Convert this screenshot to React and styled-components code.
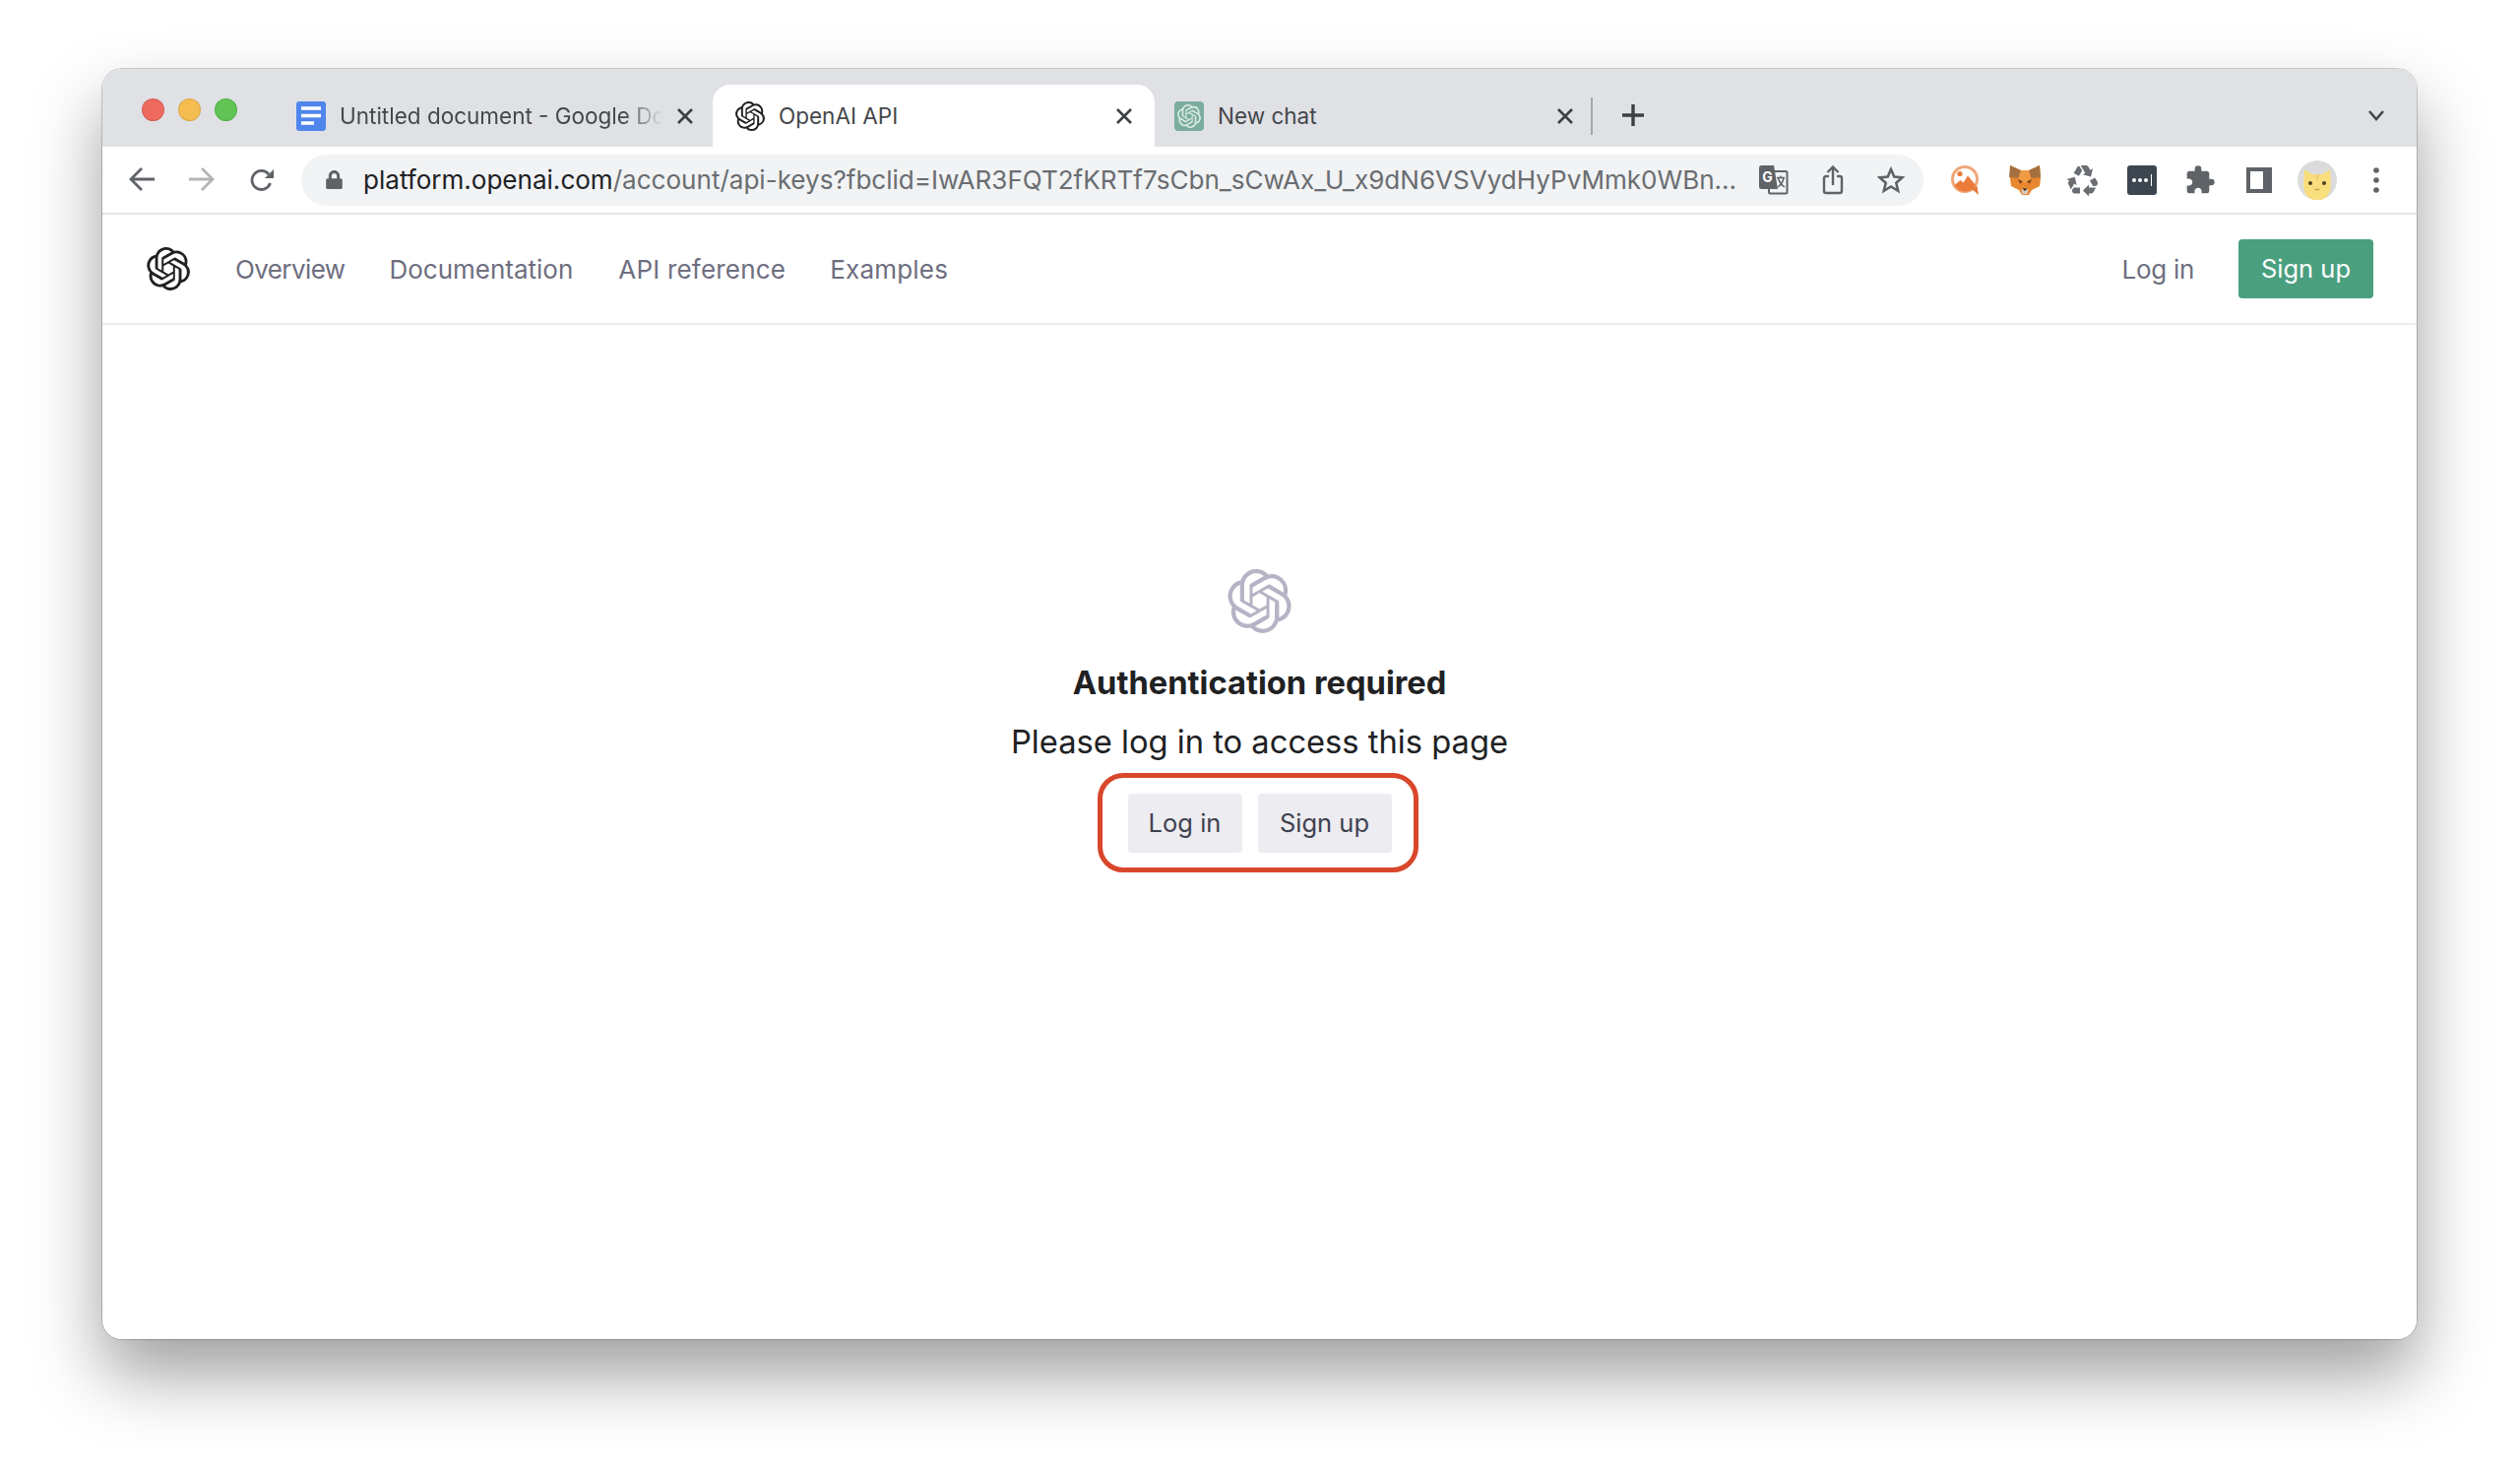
import React from "react";
import styled, { createGlobalStyle } from "styled-components";
import { SiOpenai } from "react-icons/si";
import { MdExtension, MdRecycling } from "react-icons/md";
import { FaLock } from "react-icons/fa";

const GlobalStyle = createGlobalStyle`
  html, body {
    margin: 0;
    padding: 0;
    background: #fff;
    overflow: hidden;
  }
  * { box-sizing: border-box; }
`;

const Stage = styled.div`
  width: 2560px;
  height: 1499px;
  padding: 70px 105px 0 104px;
  font-family: Inter, "Noto Sans", sans-serif;
`;

const BrowserWindow = styled.div`
  height: 1290px;
  display: flex;
  flex-direction: column;
  border-radius: 20px;
  background: #fff;
  overflow: hidden;
`;

const WindowShadow = styled.div`
  border-radius: 20px;
  box-shadow: 0 0 0 1px rgba(0, 0, 0, 0.18), 0 36px 70px rgba(0, 0, 0, 0.38);
`;

const TabStrip = styled.div`
  height: 79px;
  flex: none;
  display: flex;
  align-items: flex-end;
  background: #dfe1e5;
  padding-left: 40px;
`;

const TrafficLights = styled.div`
  width: 148px;
  align-self: flex-start;
  display: flex;
  gap: 14px;
  padding-top: 30px;
`;

const Light = styled.span`
  width: 23px;
  height: 23px;
  border-radius: 50%;
  background: ${(p) => p.$color};
  border: 1px solid rgba(0, 0, 0, 0.1);
`;

const Tab = styled.div`
  height: 63px;
  width: ${(p) => p.$width}px;
  display: flex;
  align-items: center;
  padding: 0 ${(p) => p.$right}px 0 ${(p) => p.$left}px;
  border-radius: 18px 18px 0 0;
  background: ${(p) => (p.$active ? "#fff" : "transparent")};
  color: #45474b;
  font-size: 22.5px;
`;

const TabTitle = styled.span`
  flex: 1;
  margin-left: 14px;
  white-space: nowrap;
  overflow: hidden;
  ${(p) => p.$fade && "mask-image: linear-gradient(90deg, #000 88%, transparent 100%);"}
`;

const TabClose = styled.svg`
  width: 18px;
  height: 18px;
  flex: none;
  margin: 0 0 0 14px;
`;

const TabDivider = styled.span`
  width: 2px;
  height: 38px;
  background: #a5a7ab;
  margin-bottom: 12px;
`;

const NewTab = styled.svg`
  width: 24px;
  height: 24px;
  margin: 0 0 20px 29px;
`;

const Chevron = styled.svg`
  width: 18px;
  height: 12px;
  margin: 0 32px 26px auto;
`;

const ChatBadge = styled.div`
  width: 30px;
  height: 30px;
  flex: none;
  display: flex;
  align-items: center;
  justify-content: center;
  border-radius: 4px;
  background: #7bad9f;
  color: #dcebe6;
`;

const Toolbar = styled.div`
  height: 69px;
  flex: none;
  display: flex;
  align-items: center;
  padding: 0 0 0 27px;
  border-bottom: 2px solid #e3e4e6;
`;

const NavButtons = styled.div`
  width: 175px;
  flex: none;
  display: flex;
  gap: 35px;
  color: #5f6368;
`;

const AddressBar = styled.div`
  width: 1648px;
  height: 52px;
  flex: none;
  display: flex;
  align-items: center;
  padding: 0 19px 0 24px;
  border-radius: 26px;
  background: #f1f3f4;
  color: #5f6368;
`;

const Url = styled.div`
  flex: 1;
  margin-left: 20px;
  font-size: 26.05px;
  white-space: nowrap;
  color: #6a6d71;
`;

const UrlHost = styled.span`
  color: #202124;
`;

const OmniActions = styled.div`
  display: flex;
  align-items: center;
  gap: 34px;
  margin-left: 12px;
`;

const Extensions = styled.div`
  display: flex;
  align-items: center;
  gap: 23.5px;
  margin-left: 25px;
  color: #5f6368;
`;

const IconSlot = styled.div`
  width: 36px;
  height: 36px;
  display: flex;
  align-items: center;
  justify-content: center;
`;

const PasswordExt = styled.div`
  width: 30px;
  height: 30px;
  display: flex;
  align-items: center;
  gap: 2px;
  justify-content: center;
  border-radius: 3px;
  background: #3b4650;
`;

const Dot = styled.span`
  width: 4px;
  height: 4px;
  border-radius: 50%;
  background: #fff;
`;

const Caret = styled.span`
  width: 1px;
  height: 12px;
  background: #fff;
  margin-left: 1px;
`;

const SidePanel = styled.div`
  width: 26px;
  height: 26px;
  border: 4px solid #5f6368;
  border-right-width: 9px;
`;

const Avatar = styled.svg`
  width: 40px;
  height: 40px;
  border-radius: 50%;
  flex: none;
`;

const TopNav = styled.nav`
  height: 112px;
  flex: none;
  display: flex;
  align-items: center;
  padding: 0 44px 0 45px;
  border-bottom: 2px solid #ececf1;
  font-family: Inter, sans-serif;
`;

const NavLink = styled.a`
  margin-left: ${(p) => p.$gap}px;
  font-size: 26px;
  letter-spacing: ${(p) => p.$spacing || 0}px;
  color: #6e6e80;
`;

const Spacer = styled.div`
  flex: 1;
`;

const PrimaryButton = styled.button`
  width: 137px;
  height: 60px;
  margin-left: 45px;
  padding-bottom: 2px;
  border: 0;
  border-radius: 4px;
  background: #4a9f7f;
  color: #fff;
  font: 25.5px Inter, sans-serif;
`;

const Content = styled.main`
  flex: 1;
  display: flex;
  flex-direction: column;
  align-items: center;
  padding-top: 248px;
  color: #202123;
  font-family: Inter, sans-serif;
`;

const Title = styled.h1`
  margin: 28px 0 0;
  font-size: 32.7px;
  line-height: 44px;
  font-weight: 700;
`;

const Message = styled.p`
  margin: 16px 0 0;
  font-size: 32.7px;
  line-height: 44px;
`;

const Highlight = styled.div`
  width: 326px;
  height: 101px;
  margin: 10px 4px 0 0;
  padding-left: 26px;
  display: flex;
  align-items: center;
  gap: 16px;
  border: 5px solid #d9472b;
  border-radius: 26px;
`;

const GhostButton = styled.button`
  width: ${(p) => p.$width}px;
  height: 60px;
  border: 0;
  border-radius: 4px;
  background: #ececf1;
  color: #40414f;
  font: 25.5px Inter, sans-serif;
`;

const CloseIcon = () => (
  <TabClose viewBox="0 0 18 18">
    <path d="M2 2 L16 16 M16 2 L2 16" stroke="#3c4043" strokeWidth="2.6" />
  </TabClose>
);

const DocsIcon = () => (
  <svg width="30" height="30" viewBox="0 0 30 30">
    <rect width="30" height="30" rx="3" fill="#4f86ec" />
    <path d="M5 7h20M5 14.5h20M5 22h13" stroke="#fff" strokeWidth="3.4" />
  </svg>
);

const BackArrow = ({ faded }) => (
  <svg width="26" height="24" viewBox="0 0 26 24" fill="none" stroke={faded ? "#b2b4b7" : "#5f6368"} strokeWidth="2.8">
    {faded ? <path d="M0 12h24M13 1l11 11-11 11" /> : <path d="M26 12H2M13 1L2 12l11 11" />}
  </svg>
);

const Reload = () => (
  <svg width="26" height="26" viewBox="0 0 26 26" fill="none">
    <path d="M21.5 16a9.5 9.5 0 1 1-1.6-9" stroke="#5f6368" strokeWidth="2.8" />
    <path d="M25 2v9h-9z" fill="#5f6368" />
  </svg>
);

const TranslateIcon = () => (
  <svg width="30" height="30" viewBox="0 0 30 30">
    <rect x="10" y="6" width="18.5" height="22.5" rx="1.5" fill="#f1f3f4" stroke="#5f6368" strokeWidth="2" />
    <path d="M2.5 0H15l4 24H2.5A2.5 2.5 0 0 1 0 21.5v-19A2.5 2.5 0 0 1 2.5 0z" fill="#5f6368" />
    <text x="8.5" y="17" fontSize="14" fontWeight="700" fill="#fff" textAnchor="middle" fontFamily="Inter, sans-serif">G</text>
    <path d="M18 12.5h8M22 10.5v2M19.5 13c1 4 3.5 7 6.5 9M25 13c-1 4-3 7-6 9" fill="none" stroke="#5f6368" strokeWidth="1.5" />
  </svg>
);

const ShareIcon = () => (
  <svg width="22" height="30" viewBox="0 0 22 30" fill="none" stroke="#5f6368" strokeWidth="2.4">
    <path d="M7 11H4a2 2 0 0 0-2 2v13a2 2 0 0 0 2 2h14a2 2 0 0 0 2-2V13a2 2 0 0 0-2-2h-3" />
    <path d="M11 20V2M5.500 7L11 1.500 16.500 7" />
  </svg>
);

const StarIcon = () => (
  <svg width="28" height="28" viewBox="0 0 28 28" fill="none" stroke="#5f6368" strokeWidth="2.6">
    <path d="M14 3l3.300 7.600 8.200.7-6.200 5.400 1.900 8.100L14 20.500l-7.200 4.300 1.900-8.100-6.200-5.400 8.200-.7z" />
  </svg>
);

const SnipIcon = () => (
  <svg width="32" height="32" viewBox="0 0 32 32">
    <circle cx="15" cy="15" r="12.5" fill="#fff" stroke="#f0a677" strokeWidth="3" />
    <path d="M4.500 21l6-5 3 2.500 4.500-7 8 9.500c-2 4-6 6.500-11 6.500S7 25 4.500 21z" fill="#ec7a3a" />
    <circle cx="10" cy="9.500" r="2.600" fill="#ec7a3a" />
    <path d="M22 25l7 6-1.500-9z" fill="#e67a3c" />
  </svg>
);

const FoxIcon = () => (
  <svg width="32" height="32" viewBox="0 0 32 32">
    <path d="M1 1l11 5h8l11-5 1 13-1 8-8 4-3 5h-7l-3-5-8-4-1-8z" fill="#e8872f" />
    <path d="M1 1l11 5-2.500 8L0 13zM31 1L20 6l2.500 8 9.500-1z" fill="#a4703f" />
    <path d="M16 6h4l2.500 8-6.500 5-6.500-5L12 6z" fill="#ef9a45" />
    <path d="M9 15l5 2.500-3 2zM23 15l-5 2.500 3 2z" fill="#6b3f1d" />
    <path d="M12.500 25h7l-1 5h-5z" fill="#d5cdc5" />
    <path d="M13.500 24.500h5l-2.500 2.500z" fill="#2f231b" />
  </svg>
);

const CatAvatar = () => (
  <Avatar viewBox="0 0 40 40">
    <rect width="40" height="40" fill="#dbdbde" />
    <path d="M7 9l8 5h10l8-5 1 15c0 10-6 17-14 17S6 34 6 24z" fill="#f8de7c" />
    <circle cx="13" cy="23" r="2" fill="#4f4320" />
    <circle cx="27" cy="23" r="2" fill="#4f4320" />
    <path d="M17.500 29c1.500 1 3.500 1 5 0" fill="none" stroke="#a88a3a" strokeWidth="1" />
    <path d="M18 14l2 5 2-5" fill="none" stroke="#eec56a" strokeWidth="1.2" />
  </Avatar>
);

export default function App() {
  return (
    <>
      <GlobalStyle />
      <Stage>
        <WindowShadow>
          <BrowserWindow>
            <TabStrip>
              <TrafficLights>
                <Light $color="#ee6a5f" />
                <Light $color="#f5bd4f" />
                <Light $color="#61c454" />
              </TrafficLights>
              <Tab $width="432" $left="9" $right="19">
                <DocsIcon />
                <TabTitle $fade>Untitled document - Google Docs</TabTitle>
                <CloseIcon />
              </Tab>
              <Tab $width="449" $left="23" $right="22" $active>
                <SiOpenai size={30} color="#202123" />
                <TabTitle>OpenAI API</TabTitle>
                <CloseIcon />
              </Tab>
              <Tab $width="443" $left="20" $right="17">
                <ChatBadge>
                  <SiOpenai size={24} />
                </ChatBadge>
                <TabTitle>New chat</TabTitle>
                <CloseIcon />
              </Tab>
              <TabDivider />
              <NewTab viewBox="0 0 24 24">
                <path d="M12 1v22M1 12h22" stroke="#3c4043" strokeWidth="3.4" />
              </NewTab>
              <Chevron viewBox="0 0 18 12" fill="none">
                <path d="M2 2l7 8 7-8" stroke="#45474b" strokeWidth="2.6" />
              </Chevron>
            </TabStrip>
            <Toolbar>
              <NavButtons>
                <BackArrow />
                <BackArrow faded />
                <Reload />
              </NavButtons>
              <AddressBar>
                <FaLock size={19} />
                <Url>
                  <UrlHost>platform.openai.com</UrlHost>/account/api-keys?fbclid=IwAR3FQT2fKRTf7sCbn_sCwAx_U_x9dN6VSVydHyPvMmk0WBn...
                </Url>
                <OmniActions>
                  <TranslateIcon />
                  <ShareIcon />
                  <StarIcon />
                </OmniActions>
              </AddressBar>
              <Extensions>
                <IconSlot><SnipIcon /></IconSlot>
                <IconSlot><FoxIcon /></IconSlot>
                <IconSlot><MdRecycling size={36} color="#6a6d71" /></IconSlot>
                <IconSlot>
                  <PasswordExt>
                    <Dot />
                    <Dot />
                    <Dot />
                    <Caret />
                  </PasswordExt>
                </IconSlot>
                <IconSlot><MdExtension size={32} /></IconSlot>
                <IconSlot><SidePanel /></IconSlot>
                <IconSlot><CatAvatar /></IconSlot>
                <IconSlot>
                  <svg width="6" height="26" viewBox="0 0 6 26" fill="#5f6368">
                    <circle cx="3" cy="3" r="2.8" />
                    <circle cx="3" cy="13" r="2.8" />
                    <circle cx="3" cy="23" r="2.8" />
                  </svg>
                </IconSlot>
              </Extensions>
            </Toolbar>
            <TopNav>
              <SiOpenai size={44} color="#202123" />
              <NavLink $gap="46" $spacing="-0.6">Overview</NavLink>
              <NavLink $gap="45">Documentation</NavLink>
              <NavLink $gap="46" $spacing="0.2">API reference</NavLink>
              <NavLink $gap="45" $spacing="0.2">Examples</NavLink>
              <Spacer />
              <NavLink $gap="0" $spacing="-0.3">Log in</NavLink>
              <PrimaryButton>Sign up</PrimaryButton>
            </TopNav>
            <Content>
              <SiOpenai size={65} color="#b4b4c6" />
              <Title>Authentication required</Title>
              <Message>Please log in to access this page</Message>
              <Highlight>
                <GhostButton $width="116">Log in</GhostButton>
                <GhostButton $width="136">Sign up</GhostButton>
              </Highlight>
            </Content>
          </BrowserWindow>
        </WindowShadow>
      </Stage>
    </>
  );
}
